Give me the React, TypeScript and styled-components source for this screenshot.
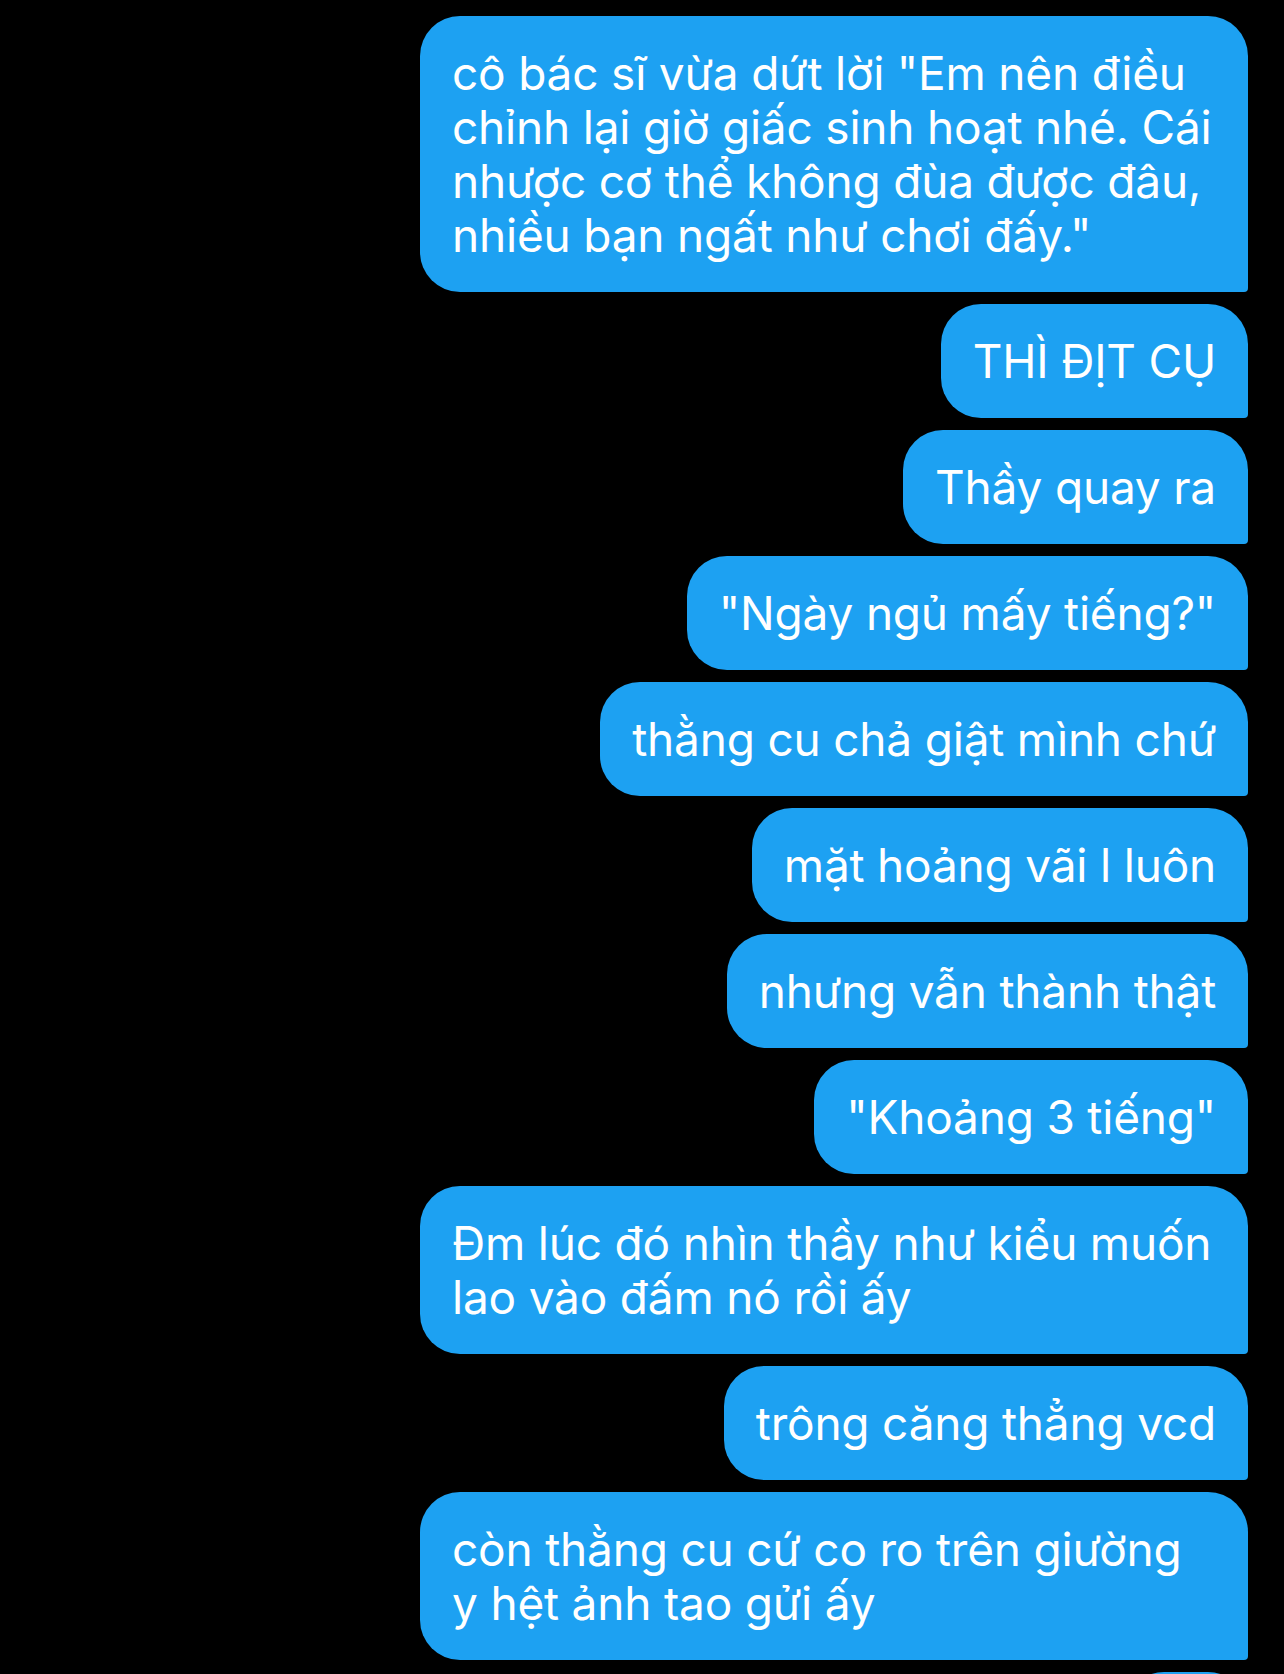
import React from "react";
import styled, { createGlobalStyle } from "styled-components";

const GlobalStyle = createGlobalStyle`
  html, body {
    margin: 0;
    padding: 0;
    background: #000000;
    height: 100%;
    overflow: hidden;
  }
  #root {
    height: 100%;
  }
`;

const Thread = styled.div`
  display: flex;
  flex-direction: column;
  align-items: flex-end;
  gap: 12px;
  padding: 16px 36px 0 0;
  box-sizing: border-box;
  height: 100%;
  background: #000000;
`;

const Bubble = styled.div<{ $width?: number }>`
  box-sizing: border-box;
  max-width: 828px;
  min-height: 114px;
  width: ${(p) => (p.$width ? `${p.$width}px` : "auto")};
  padding: 30px 32px;
  background: #1da1f2;
  color: #ffffff;
  font-family: Inter, "Noto Sans", "Liberation Sans", sans-serif;
  font-size: 46px;
  line-height: 54px;
  letter-spacing: -0.2px;
  border-radius: 40px 40px 4px 40px;
  white-space: pre-wrap;
  flex-shrink: 0;
`;

const messages: string[] = [
  'cô bác sĩ vừa dứt lời "Em nên điều chỉnh lại giờ giấc sinh hoạt nhé. Cái nhược cơ thể không đùa được đâu, nhiều bạn ngất như chơi đấy."',
  "THÌ ĐỊT CỤ",
  "Thầy quay ra",
  '"Ngày ngủ mấy tiếng?"',
  "thằng cu chả giật mình chứ",
  "mặt hoảng vãi l luôn",
  "nhưng vẫn thành thật",
  '"Khoảng 3 tiếng"',
  "Đm lúc đó nhìn thầy như kiểu muốn lao vào đấm nó rồi ấy",
  "trông căng thẳng vcd",
  "còn thằng cu cứ co ro trên giường y hệt ảnh tao gửi ấy",
];

export default function App() {
  return (
    <>
      <GlobalStyle />
      <Thread>
        {messages.map((m, i) => (
          <Bubble key={i}>{m}</Bubble>
        ))}
        <Bubble $width={124} aria-hidden="true" />
      </Thread>
    </>
  );
}
